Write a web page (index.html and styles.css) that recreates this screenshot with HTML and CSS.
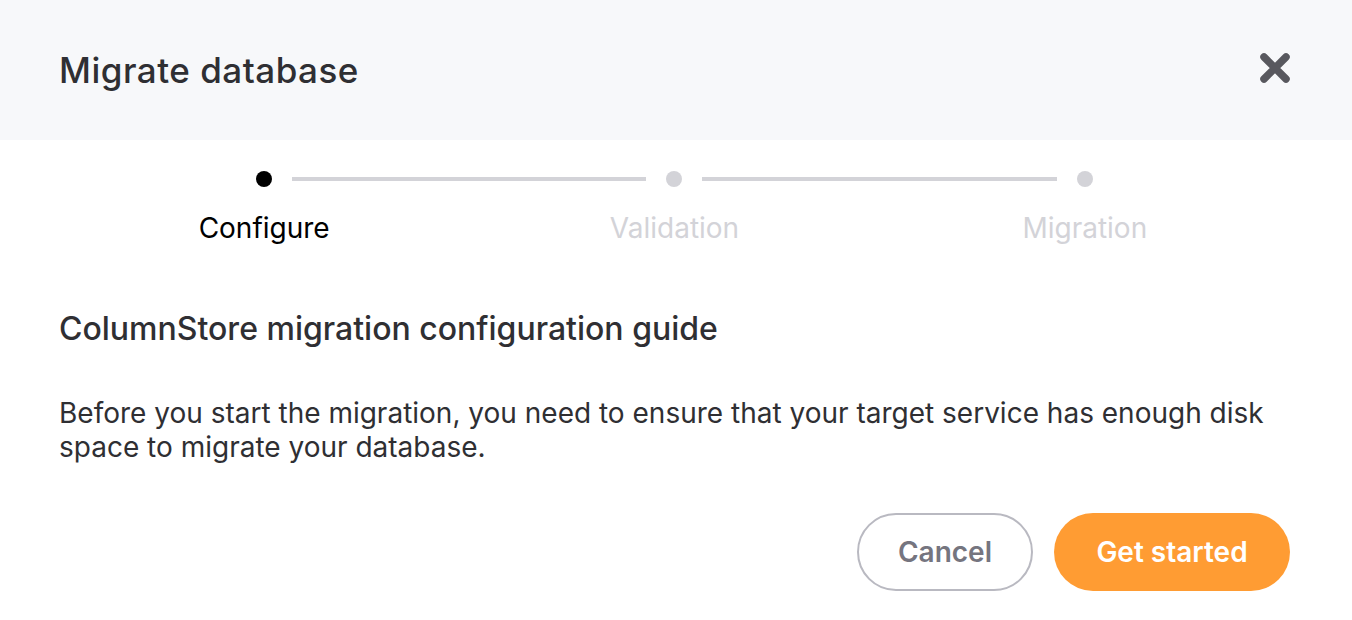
FILE: index.html
```html
<!DOCTYPE html>
<html lang="en">
<head>
<meta charset="utf-8">
<title>Migrate database</title>
<link rel="stylesheet" href="styles.css">
</head>
<body>
<div class="dialog">
  <header class="dialog-header">
    <h1 class="dialog-title">Migrate database</h1>
    <button class="close-btn" aria-label="Close">
      <svg width="32" height="32" viewBox="0 0 32 32"><path d="M5 5 L27 27 M27 5 L5 27" stroke="#58585e" stroke-width="7.5" stroke-linecap="round" fill="none"/></svg>
    </button>
  </header>
  <div class="dialog-body">
    <ol class="stepper">
      <li class="step active"><span class="dot"></span><span class="label">Configure</span></li>
      <li class="step"><span class="dot"></span><span class="label">Validation</span></li>
      <li class="step last"><span class="dot"></span><span class="label">Migration</span></li>
    </ol>
    <h2 class="section-title">ColumnStore migration configuration guide</h2>
    <p class="section-text">Before you start the migration, you need to ensure that your target service has enough disk space to migrate your database.</p>
    <div class="actions">
      <button class="btn btn-outline">Cancel</button>
      <button class="btn btn-primary">Get started</button>
    </div>
  </div>
</div>
</body>
</html>
```

FILE: styles.css
```css
* { box-sizing: border-box; }
html, body { margin: 0; padding: 0; background: #fff; }
body { font-family: Inter, "Noto Sans", sans-serif; color: #2f2f33; }

.dialog-header {
  height: 140px;
  background: #f7f8fa;
  display: flex;
  align-items: center;
  justify-content: space-between;
  padding: 0 61px 0 59px;
}
.dialog-title {
  margin: 0;
  font-size: 35px;
  font-weight: 500;
  letter-spacing: 0.5px;
  color: #2f2f33;
}
.close-btn {
  border: 0;
  background: none;
  padding: 0;
  width: 32px;
  height: 32px;
  display: flex;
  margin-top: -4px;
}

.dialog-body {
  padding: 31px 62px 0 59px;
}

.stepper {
  list-style: none;
  margin: 0;
  padding: 0;
  display: grid;
  grid-template-columns: repeat(3, 1fr);
}
.step {
  position: relative;
  display: flex;
  flex-direction: column;
  align-items: center;
}
.step::after {
  content: "";
  position: absolute;
  top: 6px;
  left: calc(50% + 28px);
  width: calc(100% - 56px);
  height: 4px;
  background: #d3d3d8;
}
.step.last::after { display: none; }
.dot {
  width: 16px;
  height: 16px;
  border-radius: 50%;
  background: #d3d3d8;
}
.step.active .dot { background: #000; }
.label {
  margin-top: 24px;
  font-size: 28px;
  line-height: 34px;
  color: #d3d3d8;
}
.step.active .label { color: #000; }

.section-title {
  margin: 64px 0 0;
  font-size: 32px;
  line-height: 40px;
  font-weight: 500;
  color: #2f2f33;
}
.section-text {
  margin: 47px 0 0;
  font-size: 28px;
  line-height: 34px;
  color: #2f2f33;
}
.actions {
  display: flex;
  justify-content: flex-end;
  gap: 21px;
  margin-top: 49px;
}
.btn {
  height: 78px;
  border-radius: 39px;
  font-family: Inter, "Noto Sans", sans-serif;
  font-size: 28px;
  font-weight: 600;
  cursor: pointer;
}
.btn-outline {
  width: 176px;
  background: #fff;
  border: 2px solid #b9b9c1;
  color: #75757f;
}
.btn-primary {
  width: 236px;
  background: #ff9c33;
  border: 0;
  color: #fff;
}
```
